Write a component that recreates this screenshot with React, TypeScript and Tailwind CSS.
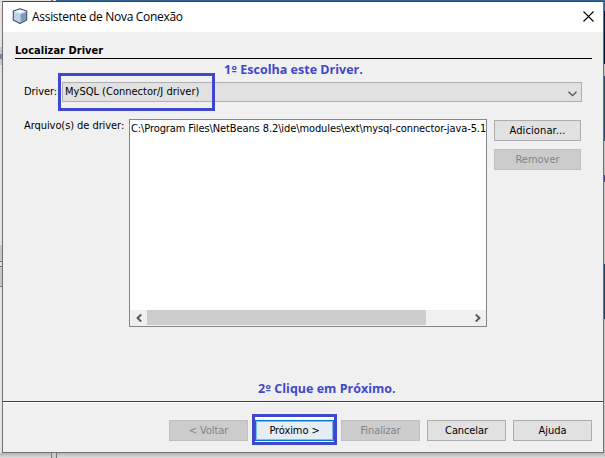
import type { ReactNode } from 'react';

function Label({ children, className = '' }: { children: ReactNode; className?: string }) {
  return (
    <span className={`whitespace-pre font-['DejaVu_Sans_Condensed','DejaVu_Sans',sans-serif] text-[11px] leading-[14px] ${className}`}>
      {children}
    </span>
  );
}

function Note({ step, children, className }: { step: string; children: ReactNode; className: string }) {
  return (
    <p className={`absolute font-['Open_Sans',sans-serif] text-[12.5px] leading-[18px] font-bold tracking-[0.01px] whitespace-pre text-[#3f48cc] ${className}`}>
      {step}
      <span className="font-['DejaVu_Sans_Condensed','DejaVu_Sans',sans-serif] text-[11.5px] leading-none">º</span> {children}
    </p>
  );
}

function Button({ children, className = '', disabled = false }: { children: ReactNode; className?: string; disabled?: boolean }) {
  const tone = disabled
    ? 'border-[#bfbfbf] bg-[#cccccc] text-[#838383]'
    : 'border-[#adadad] bg-[#e1e1e1] text-black';
  return (
    <button disabled={disabled} className={`flex h-[21px] shrink-0 items-center justify-center border ${tone} ${className}`}>
      {children}
    </button>
  );
}

function CubeIcon() {
  return (
    <svg className="mt-[6px] h-[16px] w-[16px]" viewBox="0 0 16 16">
      <path d="M8 .7 14.7 3v9L8 15.4 1.3 12V3Z" fill="#a9c2dd" stroke="#3c4c68" strokeWidth="1.1" strokeLinejoin="round" />
      <path d="M8 1.4 13.8 3.4 8 5.5 2.2 3.4Z" fill="#edf5fb" />
      <path d="M2 4 7.6 6v8.3L2 11.4Z" fill="#bdd3ea" />
      <path d="M14 4 8.4 6v8.3l5.6-2.9Z" fill="#8299bb" />
      <path d="M2.2 3.8 8 5.8l5.8-2M8 5.8v8.4" fill="none" stroke="#dce9f3" strokeWidth=".6" />
    </svg>
  );
}

function Backdrop() {
  return (
    <div className="absolute inset-0 bg-[#e4e4e4]">
      <div className="absolute top-0 left-[51px] h-px w-[2px] bg-[#777777]" />
      <div className="absolute top-0 left-[56px] h-px w-[549px] bg-[#346598]" />
      <div className="absolute top-[47px] left-0 h-[18px] w-[2px] bg-[#c8c8c8]" />
      <div className="absolute top-[54px] left-0 h-[5px] w-[2px] bg-[#6c8aa3]" />
      <div className="absolute top-[245px] left-0 h-[16px] w-[2px] bg-[#c7c7c7]" />
      <div className="absolute top-[261px] left-0 h-px w-[2px] bg-[#777780]" />
      <div className="absolute top-[266px] left-0 h-[21px] w-[2px] border-y border-[#777780] bg-[#c7c7c7]" />
      <div className="absolute top-0 left-[604px] h-[11px] w-px bg-[#346598]" />
      <div className="absolute top-[11px] left-[604px] h-[53px] w-px bg-[#031447]" />
      <div className="absolute top-[64px] left-[604px] h-[12px] w-px bg-[#c5c5c5]" />
      <div className="absolute top-[76px] left-[604px] h-[65px] w-px bg-[#344b6e]" />
      <div className="absolute top-[141px] left-[604px] h-[123px] w-px bg-[#c5c5c5]" />
      <div className="absolute top-[175px] left-[604px] h-[7px] w-px bg-[#45458c]" />
      <div className="absolute top-[264px] left-[604px] h-[55px] w-px bg-[#204568]" />
      <div className="absolute top-[319px] left-[604px] h-[139px] w-px bg-[#c5c5c5]" />
      <div className="absolute top-[453px] left-0 h-[5px] w-full bg-linear-to-b from-[#b5b5b5] to-[#dddddd]" />
      <div className="absolute top-[453px] left-[51px] h-[5px] w-[6px] border-x border-[#77777c] bg-[#cccccc]" />
    </div>
  );
}

export default function App() {
  return (
    <div className="relative h-[458px] w-[605px] overflow-hidden pt-px pl-[2px]">
      <Backdrop />
      <main className="relative flex h-[452px] w-[602px] flex-col border border-[#707070] border-t-[#304761] bg-[#f0f0f0]">
        <header className="flex h-[30px] shrink-0 bg-white pl-[9px]">
          <CubeIcon />
          <h1 className="ml-[4px] pt-[5px] font-['Open_Sans',sans-serif] text-[12px] leading-[20px] tracking-[-0.3px] whitespace-pre">Assistente de Nova Conexão</h1>
          <svg className="mt-[9px] mr-[9px] ml-auto h-[11px] w-[11px]" viewBox="0 0 11 11">
            <path d="m.5.5 10 10m0-10-10 10" stroke="#000" strokeWidth="1.1" />
          </svg>
        </header>

        <section className="relative h-[369px] shrink-0 pl-[12px]">
          <h2 className="h-[27px] w-[577px] border-b border-black pt-[12px] leading-none">
            <Label className="block font-bold tracking-[0.03px]">Localizar Driver</Label>
          </h2>
          <Note step="1" className="top-[29px] left-[221px]">Escolha este Driver.</Note>
          <div className="mt-[23px] flex h-[20px] items-center pl-[9px]">
            <Label className="w-[38px] tracking-[-0.1px]">Driver:</Label>
            <div className="flex h-[20px] w-[520px] items-center justify-between border border-[#adadb3] bg-[#e1e1e1] pr-[4px] pl-[2px]">
              <Label>MySQL (Connector/J driver)</Label>
              <svg className="mt-[3px] h-[6px] w-[9px]" viewBox="0 0 9 6">
                <path d="m.5.7 4 4 4-4" fill="none" stroke="#505050" strokeWidth="1.3" />
              </svg>
            </div>
          </div>
          <div className="absolute top-[41px] left-[55px] h-[38px] w-[157px] border-[3px] border-[#3f48cc]" />

          <div className="mt-[17px] flex pl-[9px]">
            <Label className="w-[105px] shrink-0 tracking-[-0.07px]">Arquivo(s) de driver:</Label>
            <div className="flex h-[208px] w-[358px] shrink-0 flex-col overflow-hidden border border-[#828790] bg-white">
              <div className="h-[190px] overflow-hidden pt-[2px] pl-px">
                <Label className="block tracking-[-0.1px]">C:\Program Files\NetBeans 8.2\ide\modules\ext\mysql-connector-java-5.1</Label>
              </div>
              <div className="flex h-[16px] bg-[#f0f0f0]">
                <div className="flex w-[17px] justify-center pt-[4px]">
                  <svg className="h-[8px] w-[6px]" viewBox="0 0 6 8"><path d="M5.2.5 1.5 4l3.7 3.5" fill="none" stroke="#555" strokeWidth="1.9" /></svg>
                </div>
                <div className="h-[15px] w-[279px] bg-[#cdcdcd]" />
                <div className="ml-auto flex w-[17px] justify-center pt-[4px]">
                  <svg className="h-[8px] w-[6px]" viewBox="0 0 6 8"><path d="M.8.5 4.5 4 .8 7.5" fill="none" stroke="#555" strokeWidth="1.9" /></svg>
                </div>
              </div>
            </div>
            <div className="mt-px ml-[7px] flex flex-col gap-[8px]">
              <Button className="w-[87px]"><Label className="tracking-[0.1px]">Adicionar...</Label></Button>
              <Button disabled className="w-[87px]"><Label>Remover</Label></Button>
            </div>
          </div>
          <Note step="2" className="top-[348px] left-[255px]">Clique em Próximo.</Note>
        </section>

        <footer className="flex h-[51px] shrink-0 justify-end gap-[7px] border-t border-[#3f3f3f] pt-[18px] pr-[11px] shadow-[inset_0_1px_0_#ffffff]">
          <Button disabled className="w-[79px]"><Label className="tracking-[-0.1px]">{'< Voltar'}</Label></Button>
          <div className="relative h-[21px] w-[79px]">
            <div className="absolute -top-[6px] -left-[3px] flex h-[31px] w-[85px] items-start border-[3px] border-[#3f48cc] bg-white pt-[3px]">
              <button className="flex h-[21px] w-[79px] items-center justify-center border border-[#0078d7] bg-[#e5edf5] shadow-[inset_0_0_0_1px_#7ebcf0]"><Label className="tracking-[-0.1px]">{'Próximo >'}</Label></button>
            </div>
          </div>
          <Button disabled className="w-[79px]"><Label className="tracking-[-0.1px]">Finalizar</Label></Button>
          <Button className="w-[79px]"><Label className="tracking-[-0.1px]">Cancelar</Label></Button>
          <Button className="w-[79px]"><Label>Ajuda</Label></Button>
        </footer>
      </main>
    </div>
  );
}
